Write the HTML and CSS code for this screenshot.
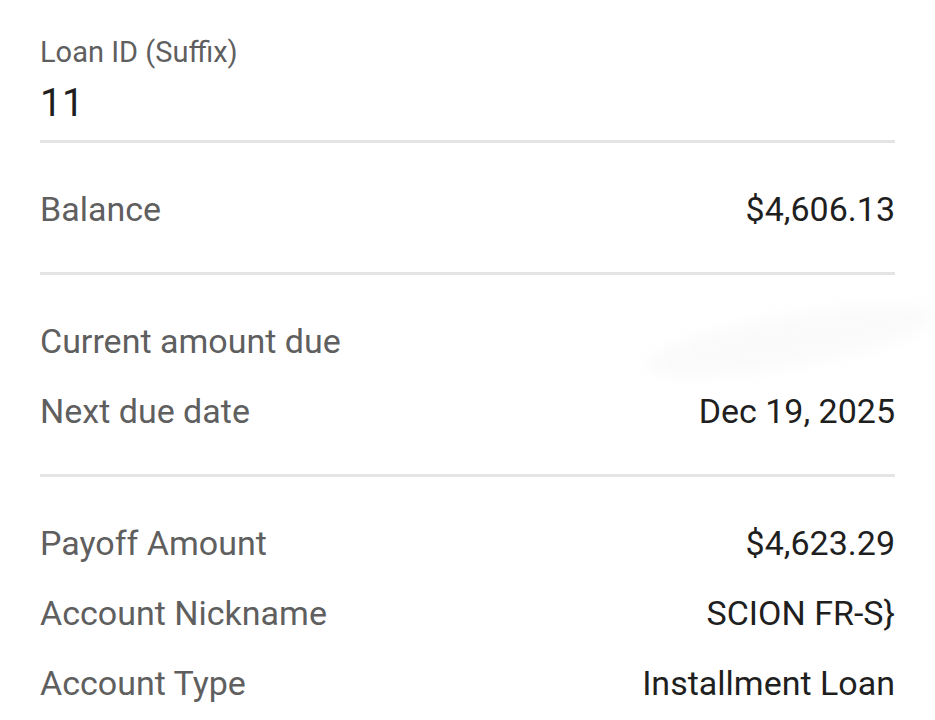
FILE: index.html
```html
<!DOCTYPE html>
<html lang="en">
<head>
<meta charset="utf-8">
<title>Loan details</title>
<link rel="stylesheet" href="styles.css">
</head>
<body>
<main class="page">
  <section class="section head">
    <div class="head-label">Loan ID (Suffix)</div>
    <div class="head-value">11</div>
  </section>
  <section class="section">
    <div class="row"><span class="label">Balance</span><span class="value">$4,606.13</span></div>
  </section>
  <section class="section">
    <div class="row"><span class="label">Current amount due</span><span class="value"><span class="smudge"></span></span></div>
    <div class="row"><span class="label">Next due date</span><span class="value">Dec 19, 2025</span></div>
  </section>
  <section class="section last">
    <div class="row"><span class="label">Payoff Amount</span><span class="value">$4,623.29</span></div>
    <div class="row"><span class="label">Account Nickname</span><span class="value">SCION FR-S}</span></div>
    <div class="row"><span class="label">Account Type</span><span class="value">Installment Loan</span></div>
  </section>
</main>
</body>
</html>
```
FILE: styles.css
```css
html, body {
  margin: 0;
  background: #ffffff;
}
body {
  font-family: Roboto, "Liberation Sans", sans-serif;
  overflow: hidden;
}
.page {
  padding: 0 40px;
}
.section {
  padding: 31px 0 28px;
  border-bottom: 3px solid #e4e4e4;
}
.section.head {
  padding: 32px 0 13px;
}
.section.last {
  border-bottom: none;
}
.head-label {
  font-size: 29px;
  line-height: 40px;
  color: #5f5f5f;
}
.head-value {
  margin-top: 7px;
  font-size: 39px;
  line-height: 48px;
  color: #1f1f1f;
}
.row {
  display: flex;
  justify-content: space-between;
  align-items: center;
  height: 70px;
  font-size: 34px;
  line-height: 70px;
}
.label {
  color: #5f5f5f;
}
.value {
  color: #1f1f1f;
}
.smudge {
  display: block;
  width: 290px;
  height: 50px;
  margin-right: -40px;
  background: #fafafa;
  border-radius: 50%;
  filter: blur(8px);
  transform: rotate(-10deg);
}
```
